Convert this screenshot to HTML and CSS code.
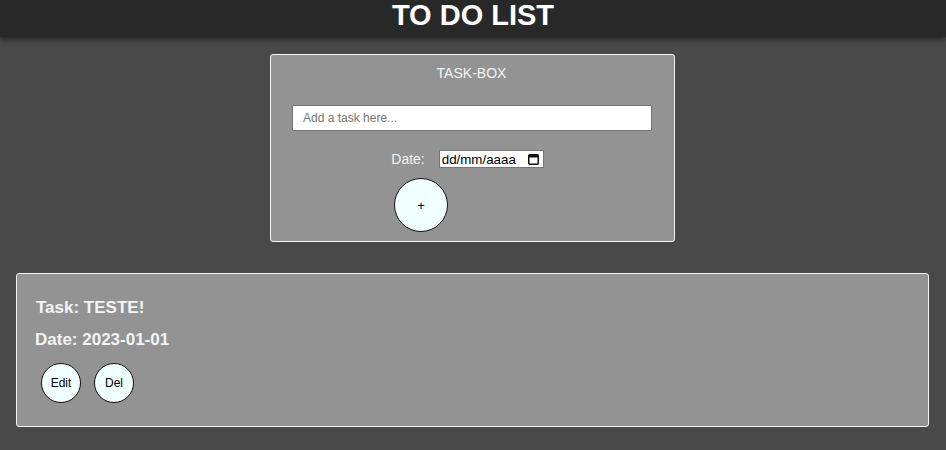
FILE: index.html
```html
<!DOCTYPE html>
<html lang="pt-BR">
<head>
<meta charset="utf-8">
<title>To Do List</title>
<link rel="stylesheet" href="styles.css">
</head>
<body>
<header class="topbar">
  <h1 class="title">TO DO LIST</h1>
</header>
<main class="page">
  <section class="task-box">
    <h2 class="box-title">TASK-BOX</h2>
    <input class="task-input" type="text" placeholder="Add a task here...">
    <div class="date-row">
      <label class="date-label">Date:</label>
      <div class="date-field">
        <span class="date-text">dd/mm/aaaa</span>
        <svg class="cal-icon" width="11" height="12" viewBox="0 0 11 12" aria-hidden="true">
          <rect x="0.75" y="1.75" width="9.5" height="9.5" rx="1" fill="none" stroke="#111" stroke-width="1.5"/>
          <rect x="1" y="2" width="9" height="2.5" fill="#111"/>
        </svg>
      </div>
    </div>
    <div class="add-row">
      <button class="round-btn add-btn">+</button>
    </div>
  </section>

  <section class="task-card">
    <p class="task-line">Task: TESTE!</p>
    <p class="date-line">Date: 2023-01-01</p>
    <div class="actions">
      <button class="round-btn small-btn">Edit</button>
      <button class="round-btn small-btn">Del</button>
    </div>
  </section>
</main>
</body>
</html>
```

FILE: styles.css
```css
* { box-sizing: border-box; }

body {
  margin: 0;
  background: #494949;
  font-family: "Liberation Sans", Arial, sans-serif;
  color: #f2f2f2;
}

.topbar {
  height: 37px;
  padding-top: 1px;
  background: #282828;
  box-shadow: 0 2px 6px rgba(30, 30, 30, 0.9);
  text-align: center;
}

.title {
  margin: 0;
  font-size: 29px;
  line-height: 29px;
  font-weight: bold;
  color: #ffffff;
}

.page {
  padding: 17px 17px 20px 16px;
}

.task-box {
  width: 405px;
  margin: 0 auto;
  background: #939393;
  border: 1px solid #f4f4f4;
  border-radius: 3px;
  padding: 9px 23px 9px 21px;
}

.box-title {
  margin: 0;
  font-size: 14px;
  font-weight: normal;
  line-height: 18px;
  text-align: center;
  color: #f4f4f4;
}

.task-input {
  display: block;
  width: 360px;
  height: 26px;
  margin: 23px 0 0;
  padding: 0 10px;
  border: 1px solid #767676;
  background: #ffffff;
  font-family: "Liberation Sans", Arial, sans-serif;
  font-size: 12px;
  color: #222;
}

.task-input::placeholder {
  color: #757575;
}

.date-row {
  display: flex;
  align-items: center;
  justify-content: center;
  gap: 14px;
  margin-top: 19px;
  padding-right: 8px;
}

.date-label {
  font-size: 14px;
  color: #f4f4f4;
}

.date-field {
  display: flex;
  align-items: center;
  justify-content: space-between;
  width: 105px;
  height: 18px;
  padding: 0 4px 0 2px;
  background: #ffffff;
  border: 1px solid #767676;
  font-size: 13.33px;
  color: #000;
}

.cal-icon {
  display: block;
}

.add-row {
  display: flex;
  padding-left: 102px;
  margin-top: 10px;
}

.round-btn {
  border-radius: 50%;
  background: #f0ffff;
  border: 1px solid #111;
  font-family: "Liberation Sans", Arial, sans-serif;
  color: #000;
  padding: 0;
  cursor: pointer;
}

.add-btn {
  width: 54px;
  height: 54px;
  font-size: 13px;
}

.task-card {
  margin-top: 31px;
  background: #939393;
  border: 1px solid #f4f4f4;
  border-radius: 3px;
  padding: 18px 18px 23px;
}

.task-line,
.date-line {
  margin: 0;
  font-size: 17px;
  font-weight: bold;
  line-height: 32px;
  color: #f4f4f4;
}

.task-line {
  padding-left: 1px;
}

.actions {
  display: flex;
  gap: 13px;
  margin-top: 7px;
  padding-left: 6px;
}

.small-btn {
  width: 40px;
  height: 40px;
  font-size: 12px;
}
```
